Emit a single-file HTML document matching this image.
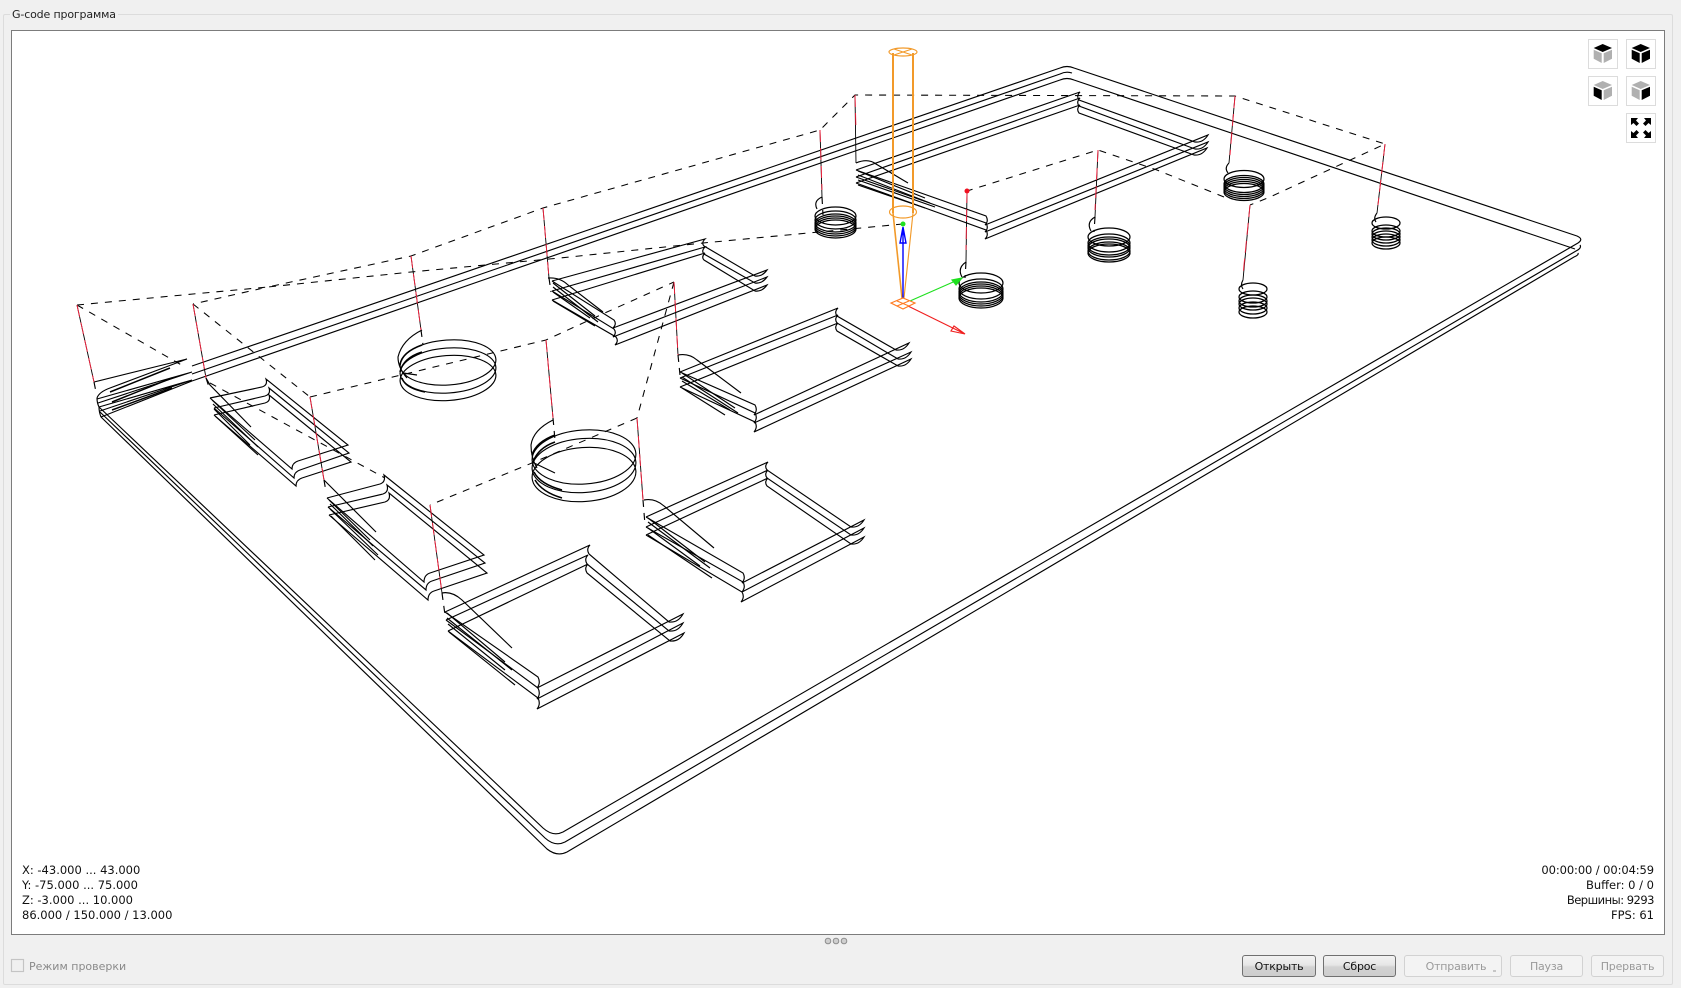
<!DOCTYPE html>
<html><head><meta charset="utf-8"><title>G-code</title>
<style>
html,body{margin:0;padding:0;background:#f0f0f0}
body{position:relative;width:1681px;height:988px;overflow:hidden;font-family:"DejaVu Sans","Liberation Sans",sans-serif;font-size:11.5px;color:#111}
div{position:absolute;box-sizing:border-box;white-space:nowrap}
#group{left:3px;top:14px;width:1670px;height:971px;border:1px solid #dcdcdc;border-radius:2px}
#title{left:10px;top:8px;background:#f0f0f0;padding:0 2px;height:14px;line-height:14px;color:#222;font-size:11px;letter-spacing:-.15px}
#frame{left:11px;top:30px;width:1654px;height:905px;background:#fff;border:1px solid #7c7c7c}
.t{height:15px;line-height:15px}
.b{top:955px;height:22px;line-height:22px;text-align:center;border-radius:3px;border:1px solid #707070;background:linear-gradient(#f3f3f3,#e6e6e6 45%,#d2d2d2 55%,#cdcdcd);color:#111;font-size:11px;letter-spacing:-.2px}
.d{border-color:#d2d2d2;background:#f3f3f3;color:#9a9a9a}
svg{position:absolute;left:0;top:0}
</style></head><body>
<div id="group"></div>
<div id="title">G-code программа</div>
<div id="frame"></div>
<svg width="1681" height="988" viewBox="0 0 1681 988" fill="none" stroke="#000" stroke-width="1.15">
<!-- outer contour -->
<path d="M192,366L1060,68Q1067,65 1074,68L1577,236Q1584,239 1578,243L563,832Q553,837 543,828L99,407"/>
<path d="M192,374L1060,74Q1066,71 1072,73M1580,245Q1582,248 1576,251L565,842Q555,847 545,838L100,412"/>
<path d="M192,381L1060,80Q1067,77 1074,80L1575,249M1578,253Q1579,255 1574,257L567,852Q557,857 547,849L101,417"/>
<!-- left corner tangle -->
<path d="M94,382L187,359M97,398Q99,392 110,388L187,359M97,399L192,372M98,403L192,372M99,407L192,380M100,411L192,380M101,417L192,381M97,398Q97,403 99,407Q99,412 101,417" />
<path stroke-width="1.5" d="M110,392L170,368M112,402L172,378M112,410L172,388"/>
<!-- pockets -->
<path d="M856,170L1080,92q-4,4-1,8L1195,142q8,1 13,-7L985,225q4,-4 1,-9L856,170M856,177L1080,98q-4,4-1,8L1195,149q8,1 13,-7L985,232q4,-4 1,-9L856,177M856,183L1080,105q-4,4-1,8L1194,155q8,1 13,-7L985,239q4,-4 1,-9L856,183"/>
<path d="M552,281L705,239q-4,4-1,7L755,276q7,1 12,-6L613,328q4,-4 1,-8L552,281M552,291L705,247q-4,4-1,7L755,283q7,1 12,-6L613,337q4,-4 1,-8L552,291M552,300L705,253q-4,4-1,7L755,291q7,1 12,-6L615,345q4,-4 1,-8L552,300"/>
<path d="M680,372L838,308q-4,4-1,8L896,350q8,1 13,-7L754,415q4,-5 1,-10L680,372M680,378L838,315q-4,4-1,8L898,359q8,1 13,-7L754,423q4,-5 1,-10L680,378M680,387L838,323q-4,4-1,8L898,366q8,1 13,-7L754,432q4,-5 1,-10L680,387"/>
<path d="M646,517L768,462q-4,4-1,8L851,527q8,1 13,-7L742,583q4,-5 1,-10L646,517M646,527L768,470q-4,4-1,8L851,535q8,1 13,-7L742,592q4,-5 1,-10L646,527M646,535L768,478q-4,4-1,8L851,544q8,1 13,-7L741,602q4,-5 1,-10L646,535"/>
<path d="M445,612L590,545q-4,4-1,9L669,622q9,1 14,-8L537,688q4,-5 1,-11L445,612M446,620L588,555q-4,4-1,9L669,631q9,1 14,-8L537,699q4,-5 1,-11L446,620M448,631L588,564q-4,4-1,9L670,641q9,1 14,-8L537,709q4,-5 1,-11L448,631"/>
<path d="M210,398L262,387q6,-2 4,-8L348,445L298,461q-6,2 -6,8L210,398M214,408L265,396q6,-2 4,-8L349,453L300,470q-6,2 -6,8L214,408M214,415L265,403q6,-2 4,-8L351,462L302,478q-6,2 -6,8L214,415"/>
<path d="M327,498L380,484q6,-2 4,-9L484,555L430,573q-6,2 -6,9L327,498M328,507L383,494q6,-2 4,-9L485,563L432,581q-6,2 -6,9L328,507M329,515L385,502q6,-2 4,-9L487,573L434,591q-6,2 -6,9L329,515"/>
<!-- wedges and dense helix lead-ins -->
<path d="M856,163Q868,158 876,164L908,183M858,171L925,198M858,175L930,203M858,180L935,207M858,185L925,208
M548,278Q560,277 568,285L603,312M553,283L595,316M553,287L598,322M553,292L590,318M553,301L595,326
M678,355Q689,353 697,360L741,393M682,373L735,408M682,377L738,413M682,381L730,410M682,388L725,415
M644,500Q655,498 664,506L714,548M648,518L705,562M648,522L710,568M648,528L700,566M648,535L712,578
M442,593Q452,591 462,600L512,648M447,613L505,662M447,618L512,670M448,624L505,670M449,632L515,685
M206,378L210,385L251,427M212,400L255,440M213,404L258,447M214,409L250,445M215,416L258,455
M324,480L329,485L376,532M329,500L370,540M330,504L373,546M330,509L378,555M331,516L375,560"/>
<!-- circles -->
<g>
<ellipse cx="448" cy="362.5" rx="48" ry="22.5" transform="rotate(-4 448 362.5)"/>
<ellipse cx="448" cy="370.5" rx="48" ry="22.5" transform="rotate(-4 448 370.5)"/>
<ellipse cx="448" cy="378" rx="48" ry="22.5" transform="rotate(-4 448 378)"/>
<ellipse cx="584" cy="457" rx="52" ry="27" transform="rotate(-4 584 457)"/>
<ellipse cx="584" cy="465.5" rx="52" ry="27" transform="rotate(-4 584 465.5)"/>
<ellipse cx="584" cy="474.5" rx="52" ry="27" transform="rotate(-4 584 474.5)"/>
<path d="M422,330Q402,340 398,357Q398,368 407,378M403,373L417,375"/>
<path stroke-width="1.5" d="M400,365Q402,352 422,345M400,372Q403,358 422,352M402,378Q405,388 425,392"/>
<path d="M553,420Q533,430 531,445Q531,458 537,468M532,462L555,473"/>
<path stroke-width="1.5" d="M532,455Q536,442 555,435M533,462Q538,448 555,442M534,472Q540,484 562,490M535,480Q542,492 562,498"/>
</g>
<!-- springs -->
<g stroke-width="1.25">
<ellipse cx="835.5" cy="216" rx="20.5" ry="9"/><ellipse cx="835.5" cy="220" rx="20.5" ry="9"/><ellipse cx="835.5" cy="223" rx="20.5" ry="9"/><ellipse cx="835.5" cy="225" rx="20.5" ry="9"/><ellipse cx="835.5" cy="227" rx="20.5" ry="9"/><ellipse cx="835.5" cy="229" rx="20.5" ry="9"/>
<ellipse cx="981" cy="283" rx="22" ry="10"/><ellipse cx="981" cy="289" rx="22" ry="10"/><ellipse cx="981" cy="292" rx="22" ry="10"/><ellipse cx="981" cy="294" rx="22" ry="10"/><ellipse cx="981" cy="296" rx="22" ry="10"/><ellipse cx="981" cy="298" rx="22" ry="10"/>
<ellipse cx="1109" cy="237" rx="21" ry="9"/><ellipse cx="1109" cy="243" rx="21" ry="9"/><ellipse cx="1109" cy="246" rx="21" ry="9"/><ellipse cx="1109" cy="248" rx="21" ry="9"/><ellipse cx="1109" cy="251" rx="21" ry="9"/><ellipse cx="1109" cy="253" rx="21" ry="9"/>
<ellipse cx="1244" cy="179" rx="20" ry="8.5"/><ellipse cx="1244" cy="184" rx="20" ry="8.5"/><ellipse cx="1244" cy="186" rx="20" ry="8.5"/><ellipse cx="1244" cy="188" rx="20" ry="8.5"/><ellipse cx="1244" cy="190" rx="20" ry="8.5"/><ellipse cx="1244" cy="192" rx="20" ry="8.5"/>
<ellipse cx="1386" cy="223" rx="14" ry="6"/><ellipse cx="1386" cy="231" rx="14" ry="6"/><ellipse cx="1386" cy="234" rx="14" ry="6"/><ellipse cx="1386" cy="237" rx="14" ry="6"/><ellipse cx="1386" cy="240" rx="14" ry="6"/><ellipse cx="1386" cy="243" rx="14" ry="6"/>
<ellipse cx="1253" cy="289" rx="14" ry="6"/><ellipse cx="1253" cy="297" rx="14" ry="6"/><ellipse cx="1253" cy="301" rx="14" ry="6"/><ellipse cx="1253" cy="304" rx="14" ry="6"/><ellipse cx="1253" cy="308" rx="14" ry="6"/><ellipse cx="1253" cy="312" rx="14" ry="6"/>
<path stroke-width="1.15" d="M822,197Q813,201 817,209M966,262Q957,268 962,277M1095,217Q1086,222 1091,231M1229,163Q1224,168 1228,173M1377,213Q1373,218 1376,222M1243,280Q1240,285 1243,289"/>
</g>
<!-- rapid moves -->
<path stroke-width="1.05" stroke-dasharray="7 7" d="M77,305L193,294L268,287L411,256L543,208L820,130L855,95L1235,96L1385,144L1270,197L1250,205M1224,197L1157,170L1098,150L967,191M903,224L703,243L560,258L411,272L268,287L193,304M77,305L185,367M193,304L310,397M310,397L546,340L607,312L674,282M674,282L637,418M637,418L532,463L430,505M210,383L385,478"/>
<!-- plunges black -->
<path stroke-width=".9" d="M77,305L94,382M193,304L206,378M310,397L324,480M411,256L421,330M543,208L549,278M546,340L553,418M674,282L678,355M637,418L643,500M430,505L442,593M820,130L822,197M855,95L856,163M967,191L966,262M1098,150L1095,217M1235,96L1229,163M1385,144L1377,213M1250,205L1243,280"/>
<path stroke-dasharray="7 6" d="M94,382L96,392M206,378L210,390M324,480L326,492M421,330L423,345M549,278L551,292M553,418L555,440M678,355L680,375M643,500L645,525M442,593L445,615M822,197L823,215M966,262L965,278M1095,217L1094,232"/>
<!-- plunges red overlay -->
<path stroke="#f0203c" stroke-width=".95" stroke-dasharray="12 6" d="M77,305L94,382M193,304L206,378M310,397L324,480M411,256L421,330M543,208L549,278M546,340L553,418M674,282L678,355M637,418L643,500M430,505L442,593M820,130L822,190M855,95L856,130M967,191L966,250M1098,150L1095,210M1235,96L1230,155M1385,144L1378,205M1250,205L1243,275"/>
<!-- tool -->
<g stroke="#f29a2a">
<ellipse cx="903" cy="52" rx="14" ry="4"/>
<path d="M894,49L912,55M912,49L894,55"/>
<ellipse cx="903" cy="212" rx="13.5" ry="6"/>
<path stroke-width="2" d="M893,53L893,213M913,53L913,213"/>
<path stroke-width="1.6" d="M893,213L902,298"/>
<path d="M913,213L904,298"/>
</g>
<path stroke="#00f" stroke-width="1.4" d="M903,298L903,227M900,243L903,227L906,243Z"/>
<path stroke="#1fe01f" d="M910,301L960,279"/><path stroke="#1fe01f" fill="#1fe01f" d="M952,280L962,278L956,285Z"/>
<path stroke="#f02020" d="M908,306L965,334M954,326L965,334L951,331Z"/>
<path stroke="#ff7a20" d="M891,303L903,298L915,303L903,309ZM897,301L909,306M909,301L897,306"/>
<circle cx="903" cy="224" r="2.5" fill="#1fe01f" stroke="none"/>
<circle cx="967" cy="191" r="2.5" fill="#f01020" stroke="none"/>
<!-- view buttons -->
<g stroke-width="1">
<rect x="1588.5" y="39.5" width="29" height="29" stroke="#dcdcdc" fill="#fff"/>
<rect x="1626.5" y="39.5" width="29" height="29" stroke="#dcdcdc" fill="#fff"/>
<rect x="1588.5" y="76.5" width="29" height="29" stroke="#dcdcdc" fill="#fff"/>
<rect x="1626.5" y="76.5" width="29" height="29" stroke="#dcdcdc" fill="#fff"/>
<rect x="1626.5" y="113.5" width="29" height="29" stroke="#dcdcdc" fill="#fff"/>
</g>
<g stroke="none">
<g transform="translate(1588,39)"><path fill="#000" d="M5.7,9L14.7,5L24,9L14.7,13Z"/><path fill="#b0b0b0" d="M5.7,10.7L13.7,14.3L13.7,24L5.7,19.7ZM15.7,14.3L24,10.7L24,19.7L15.7,24Z"/></g>
<g transform="translate(1626,39)"><path fill="#000" d="M5.7,9L14.7,5L24,9L14.7,13ZM5.7,10.7L13.7,14.3L13.7,24L5.7,19.7ZM15.7,14.3L24,10.7L24,19.7L15.7,24Z"/></g>
<g transform="translate(1588,76)"><path fill="#b0b0b0" d="M5.7,9L14.7,5L24,9L14.7,13ZM15.7,14.3L24,10.7L24,19.7L15.7,24Z"/><path fill="#000" d="M5.7,10.7L13.7,14.3L13.7,24L5.7,19.7Z"/></g>
<g transform="translate(1626,76)"><path fill="#b0b0b0" d="M5.7,9L14.7,5L24,9L14.7,13ZM5.7,10.7L13.7,14.3L13.7,24L5.7,19.7Z"/><path fill="#000" d="M15.7,14.3L24,10.7L24,19.7L15.7,24Z"/></g>
<g transform="translate(1626,113)" fill="#000"><path d="M5,5L12,5L10,7.5L13,10.5L10.5,13L7.5,10L5,12Z"/><path d="M25,5L18,5L20,7.5L17,10.5L19.5,13L22.500,10L25,12Z"/><path d="M5,25L12,25L10,22.5L13,19.5L10.5,17L7.5,20L5,18Z"/><path d="M25,25L18,25L20,22.5L17,19.5L19.5,17L22.5,20L25,18Z"/></g>
</g>
<!-- splitter dots -->
<g fill="#cfcfcf" stroke="#8e8e8e" stroke-width="1"><circle cx="828" cy="941" r="2.8"/><circle cx="836" cy="941" r="2.8"/><circle cx="844" cy="941" r="2.8"/></g>
<!-- checkbox -->
<rect x="11.500" y="959.500" width="12" height="12" fill="#f0f0f0" stroke="#c4c4c4"/>
</svg>
<div class="t" style="left:22px;top:863px">X: -43.000 ... 43.000</div>
<div class="t" style="left:22px;top:878px">Y: -75.000 ... 75.000</div>
<div class="t" style="left:22px;top:893px">Z: -3.000 ... 10.000</div>
<div class="t" style="left:22px;top:908px">86.000 / 150.000 / 13.000</div>
<div class="t" style="right:27px;top:863px;letter-spacing:-.1px">00:00:00 / 00:04:59</div>
<div class="t" style="right:27px;top:878px">Buffer: 0 / 0</div>
<div class="t" style="right:27px;top:893px;letter-spacing:-.5px">Вершины: 9293</div>
<div class="t" style="right:27px;top:908px">FPS: 61</div>
<div class="t" style="left:29px;top:959px;color:#8a8a8a;font-size:11px">Режим проверки</div>
<div class="b" style="left:1242px;width:74px">Открыть</div>
<div class="b" style="left:1323px;width:73px">Сброс</div>
<div class="b d" style="left:1404px;width:98px;padding-right:0;padding-left:6px">Отправить</div>
<svg style="left:1492px;top:968px" width="8" height="6"><path d="M1,3h3" stroke="#999" fill="none"/></svg>
<div class="b d" style="left:1510px;width:73px">Пауза</div>
<div class="b d" style="left:1591px;width:73px">Прервать</div>
</body></html>
